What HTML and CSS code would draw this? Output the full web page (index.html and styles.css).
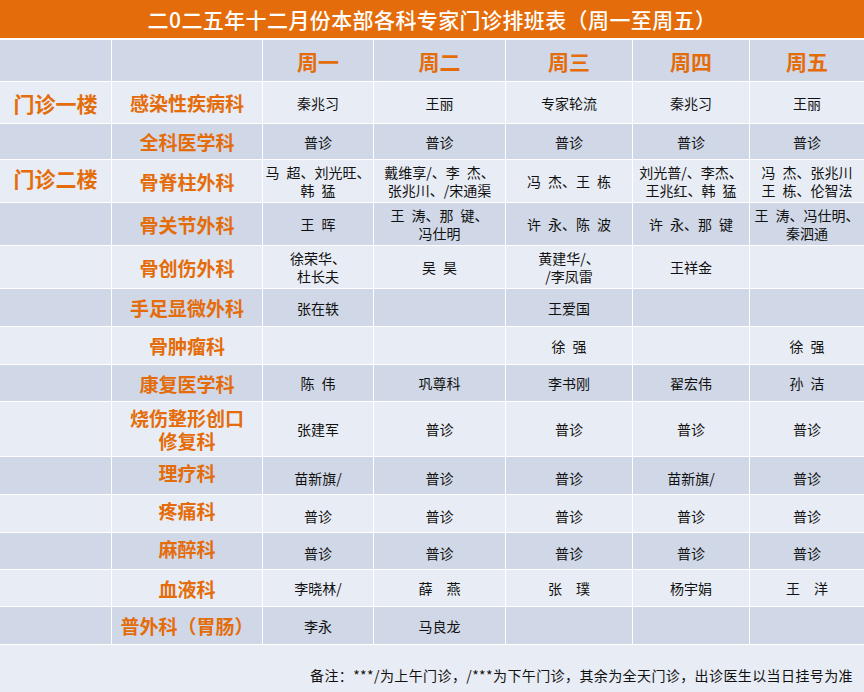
FILE: index.html
```html
<!DOCTYPE html>
<html lang="zh-CN">
<head>
<meta charset="utf-8">
<title>专家门诊排班表</title>
<link rel="stylesheet" href="styles.css">
</head>
<body>
<div class="page">
  <div class="title">二0二五年十二月份本部各科专家门诊排班表（周一至周五）</div>
  <div class="table">
    <div class="row dark h41 head">
      <div></div><div></div>
      <div>周一</div><div>周二</div><div>周三</div><div>周四</div><div>周五</div>
    </div>
    <div class="row light h41">
      <div class="floor">门诊一楼</div><div class="dept">感染性疾病科</div>
      <div>秦兆习</div><div>王丽</div><div>专家轮流</div><div>秦兆习</div><div>王丽</div>
    </div>
    <div class="row dark h35">
      <div></div><div class="dept">全科医学科</div>
      <div>普诊</div><div>普诊</div><div>普诊</div><div>普诊</div><div>普诊</div>
    </div>
    <div class="row light h42 two">
      <div class="floor up">门诊二楼</div><div class="dept">骨脊柱外科</div>
      <div>马&ensp;超、刘光旺、<br>韩&ensp;猛</div>
      <div>戴维享/、李&ensp;杰、<br>张兆川、/宋通渠</div>
      <div>冯&ensp;杰、王&ensp;栋</div>
      <div>刘光普/、李杰、<br>王兆红、韩&ensp;猛</div>
      <div>冯&ensp;杰、张兆川<br>王&ensp;栋、伦智法</div>
    </div>
    <div class="row dark h42 two">
      <div></div><div class="dept">骨关节外科</div>
      <div>王&ensp;晖</div>
      <div>王&ensp;涛、那&ensp;键、<br>冯仕明</div>
      <div>许&ensp;永、陈&ensp;波</div>
      <div>许&ensp;永、那&ensp;键</div>
      <div>王&ensp;涛、冯仕明、<br>秦泗通</div>
    </div>
    <div class="row light h42 two">
      <div></div><div class="dept">骨创伤外科</div>
      <div>徐荣华、<br>杜长夫</div>
      <div>吴&ensp;昊</div>
      <div>黄建华/、<br>/李凤雷</div>
      <div>王祥金</div>
      <div></div>
    </div>
    <div class="row dark h37">
      <div></div><div class="dept">手足显微外科</div>
      <div>张在轶</div><div></div><div>王爱国</div><div></div><div></div>
    </div>
    <div class="row light h37">
      <div></div><div class="dept">骨肿瘤科</div>
      <div></div><div></div><div>徐&ensp;强</div><div></div><div>徐&ensp;强</div>
    </div>
    <div class="row dark h36">
      <div></div><div class="dept">康复医学科</div>
      <div>陈&ensp;伟</div><div>巩尊科</div><div>李书刚</div><div>翟宏伟</div><div>孙&ensp;洁</div>
    </div>
    <div class="row light h54">
      <div></div><div class="dept multi">烧伤整形创口<br>修复科</div>
      <div>张建军</div><div>普诊</div><div>普诊</div><div>普诊</div><div>普诊</div>
    </div>
    <div class="row dark h37 shifted">
      <div></div><div class="dept">理疗科</div>
      <div>苗新旗/</div><div>普诊</div><div>普诊</div><div>苗新旗/</div><div>普诊</div>
    </div>
    <div class="row light h37 shifted">
      <div></div><div class="dept">疼痛科</div>
      <div>普诊</div><div>普诊</div><div>普诊</div><div>普诊</div><div>普诊</div>
    </div>
    <div class="row dark h36 shifted">
      <div></div><div class="dept">麻醉科</div>
      <div>普诊</div><div>普诊</div><div>普诊</div><div>普诊</div><div>普诊</div>
    </div>
    <div class="row light h36">
      <div></div><div class="dept">血液科</div>
      <div>李晓林/</div><div>薛&emsp;燕</div><div>张&emsp;璞</div><div>杨宇娟</div><div>王&emsp;洋</div>
    </div>
    <div class="row dark h37">
      <div></div><div class="dept">普外科（胃肠）</div>
      <div>李永</div><div>马良龙</div><div></div><div></div><div></div>
    </div>
  </div>
  <div class="note">备注：***/为上午门诊，/***为下午门诊，其余为全天门诊，出诊医生以当日挂号为准</div>
</div>
</body>
</html>
```

FILE: styles.css
```css
html, body {
  margin: 0;
  padding: 0;
}

body {
  background: #e8ecf4;
  font-family: "Noto Sans CJK SC", "Microsoft YaHei", sans-serif;
  color: #111;
}

.page {
  width: 864px;
  height: 692px;
  display: flex;
  flex-direction: column;
}

.title {
  height: 38px;
  background: #e46c0a;
  border-bottom: 2px solid #ffffff;
  color: #ffffff;
  font-size: 21px;
  font-weight: 500;
  letter-spacing: 0.4px;
  display: flex;
  align-items: center;
  justify-content: center;
}

.table {
  display: flex;
  flex-direction: column;
  gap: 1px;
  background: #ffffff;
  border-bottom: 1px solid #ffffff;
}

.row {
  display: grid;
  grid-template-columns: 111px 150px 110px 131px 126px 116px 114px;
  gap: 1px;
}

.row > div {
  display: flex;
  align-items: center;
  justify-content: center;
  text-align: center;
  font-size: 14px;
  line-height: 18px;
  white-space: nowrap;
}

.row.dark > div { background: #d0d7e6; }
.row.light > div { background: #e8ecf4; }

.h35 { height: 35px; }
.h36 { height: 36px; }
.h37 { height: 37px; }
.h41 { height: 41px; }
.h42 { height: 42px; }
.h54 { height: 54px; }

.row.head > div {
  color: #e46c0a;
  font-size: 21px;
  font-weight: 700;
}

.row > .dept {
  color: #e46c0a;
  font-size: 19px;
  font-weight: 700;
  line-height: 23px;
}

.row > .floor {
  color: #e46c0a;
  font-size: 21px;
  font-weight: 700;
}

.row > .floor.up {
  padding-bottom: 7px;
  box-sizing: border-box;
}

.row.shifted > div {
  padding-top: 4px;
  box-sizing: border-box;
}

.row.shifted > .dept {
  padding-top: 0;
  padding-bottom: 6px;
}

.note {
  flex: 1;
  display: flex;
  align-items: center;
  justify-content: flex-end;
  padding-right: 11px;
  padding-top: 12px;
  box-sizing: border-box;
  font-size: 14px;
  letter-spacing: 0.4px;
  color: #111;
}
```
